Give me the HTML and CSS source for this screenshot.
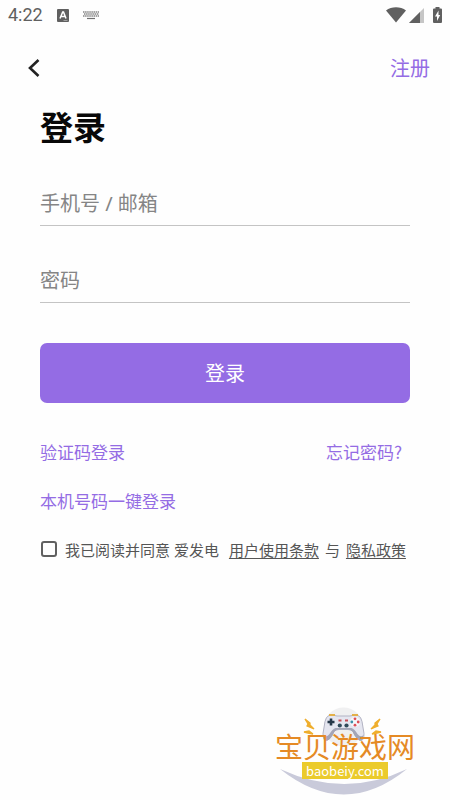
FILE: index.html
```html
<!DOCTYPE html>
<html lang="zh-CN">
<head>
<meta charset="utf-8">
<meta name="viewport" content="width=device-width, initial-scale=1">
<title>登录</title>
<link rel="stylesheet" href="styles.css">
</head>
<body>
<div class="screen">
  <div class="status">
    <div class="status-left">
      <span class="clock">4:22</span>
      <svg width="12" height="13" viewBox="0 0 12 13" aria-hidden="true">
        <rect width="12" height="13" rx="1" fill="#606060"/>
        <path d="M3 9.500 5.700 3h.8L9 9.500M4 7.500h4" fill="none" stroke="#fff" stroke-width="1.500"/>
        <path d="M6.500 11.500h4" stroke="#bbb" stroke-width=".7"/>
      </svg>
      <svg width="16" height="9" viewBox="0 0 16 9" aria-hidden="true">
        <path d="M0 1h16M1 3h15M0 5h16" stroke="#858585" stroke-width="1.300" stroke-dasharray="1.500 .6" fill="none"/>
        <path d="M4 7.500h8" stroke="#707070" stroke-width="1.200"/>
      </svg>
    </div>
    <div class="status-right">
      <svg width="20" height="16" viewBox="0 0 20 16" aria-hidden="true">
        <path d="M0 3.500C5.500-.8 14.500-.8 20 3.500L10 15.500Z" fill="#606060"/>
      </svg>
      <svg width="15" height="15" viewBox="0 0 15 15" aria-hidden="true">
        <path d="M15 0v15H0Z" fill="#c6c6c6"/>
        <path d="M11 4v11H0Z" fill="#606060"/>
      </svg>
      <svg class="battery" width="9" height="16" viewBox="0 0 9 16" aria-hidden="true">
        <path d="M2.500 0h4v1.500H8q1 0 1 1V15q0 1-1 1H1q-1 0-1-1V2.500q0-1 1-1h1.500Z" fill="#606060"/>
        <path d="M5.500 3.500 2 9.500h2V14l3.200-6H5.500Z" fill="#fff"/>
      </svg>
    </div>
  </div>

  <header class="bar">
    <button class="back" type="button" aria-label="返回">
      <svg width="12" height="18" viewBox="0 0 12 18" aria-hidden="true">
        <path d="M10.500 1 2 9l8.500 8" fill="none" stroke="#222" stroke-width="2.600"/>
      </svg>
    </button>
    <a class="register" href="#register">注册</a>
  </header>

  <main class="content">
    <h1 class="title">登录</h1>
    <form class="form">
      <input class="field" type="text" aria-label="手机号 / 邮箱" placeholder="手机号 / 邮箱">
      <input class="field" type="password" aria-label="密码" placeholder="密码">
      <button class="submit" type="button">登录</button>
      <div class="links">
        <a href="#code">验证码登录</a>
        <a href="#forgot">忘记密码?</a>
      </div>
      <div class="links">
        <a href="#phone">本机号码一键登录</a>
      </div>
      <div class="agree">
        <input class="check" type="checkbox" id="agree">
        <label for="agree">我已阅读并同意 爱发电</label>
        <a class="terms" href="#terms">用户使用条款</a>
        <span class="and">与</span>
        <a href="#privacy">隐私政策</a>
      </div>
    </form>
  </main>

  <footer class="brand">
    <svg class="art" width="138" height="89" viewBox="0 0 138 89" aria-hidden="true">
      <circle cx="68.500" cy="20" r="19.500" fill="#f0f0f1"/>
      <path d="M5 62Q69 113 132 62Q70 92 5 62Z" fill="#c9cada"/>
      <path d="M54 8.500q4-1 8 .5h13q4-1.500 8-.5 3 1 4 6l2 12q0 7-3 7-4 0-8-9-2-2-5-2h-9q-3 0-5 2-4 9-8 9-3 0-3-7l2-12q1-5 4-6Z" fill="#e5e6f0" stroke="#b3b4c4"/>
      <path d="M48.500 28q3 3 6-1 3-5 6-6h16q3 1 6 6 3 4 6 1-1 6-3 5.500-4 0-8-9-2-2-5-2h-8q-3 0-5 2-4 9-8 9-3 0-3-5.500Z" fill="#a4a5b7"/>
      <path d="M54 8h6M77 8h6" stroke="#e3b04a" stroke-width="1.800"/>
      <path d="M56 11.500v7M52.500 15h7" stroke="#263849" stroke-width="2.600"/>
      <circle cx="80" cy="15" r="5" fill="#f6f7fb"/>
      <circle cx="80" cy="11.800" r="1.400" fill="#dc4f59"/>
      <circle cx="80" cy="18.200" r="1.400" fill="#dc4f59"/>
      <circle cx="76.800" cy="15" r="1.400" fill="#3d8fa8"/>
      <circle cx="83.200" cy="15" r="1.400" fill="#dc4f59"/>
      <path d="M63.500 13.500h3M70 13.500h3" stroke="#c64b55" stroke-width="2"/>
      <circle cx="64.800" cy="18.500" r="2.100" fill="#304a5a"/>
      <circle cx="71.500" cy="18.500" r="2.100" fill="#304a5a"/>
      <path d="m30 12 5 4 0 2 4 4-7-3 1-2ZM29 25l5-1 4 3-5-1ZM105 12l-5 4 0 2-4 4 7-3-1-2ZM106 25l-5-1-4 3 5-1Z" fill="#efae2d" stroke="#efae2d" stroke-width="1.300"/>
    </svg>
    <div class="brand-name">宝贝游戏网</div>
    <div class="brand-url">baobeiy.com</div>
  </footer>
</div>
</body>
</html>
```
FILE: styles.css
```css
* {
  box-sizing: border-box;
}

body {
  margin: 0;
  background: #fefefe;
  color: #555;
  font-family: "Noto Sans", "Noto Sans CJK SC", sans-serif;
}

a {
  color: inherit;
  text-decoration: none;
}

button,
input {
  font-family: inherit;
}

svg {
  display: block;
}

.screen {
  display: flex;
  flex-direction: column;
  min-height: 100vh;
}

.status {
  display: flex;
  justify-content: space-between;
  align-items: center;
  height: 30px;
  padding: 0 8px;
}

.status-left {
  display: flex;
  align-items: center;
  gap: 14px;
}

.clock {
  font-family: Roboto, sans-serif;
  font-size: 18px;
  line-height: 32px;
  color: #606060;
}

.status-right {
  display: flex;
  align-items: center;
  gap: 3px;
}

.battery {
  margin-left: 6px;
}

.bar {
  display: flex;
  justify-content: space-between;
  align-items: center;
  height: 76px;
  padding: 0 20px 0 28px;
}

.back {
  padding: 0;
  border: 0;
  background: none;
}

.register {
  padding-bottom: 2px;
  font-size: 20px;
  color: #946ce4;
}

.content {
  padding: 0 40px;
}

.title {
  margin: 0;
  font-size: 33px;
  line-height: 44px;
  font-weight: 700;
  color: #080808;
}

.form {
  display: flex;
  flex-direction: column;
  padding-top: 28px;
}

.field {
  width: 100%;
  height: 48px;
  margin-bottom: 29px;
  padding: 4px 0 0;
  border: 0;
  border-bottom: 1px solid #c4c4c4;
  border-radius: 0;
  outline: 0;
  background: transparent;
  font-size: 20px;
}

.field::placeholder {
  color: #858585;
  opacity: 1;
}

.submit {
  height: 60px;
  margin: 11px 0 24px;
  padding: 0 0 2px;
  border: 0;
  border-radius: 7px;
  background: #946ce4;
  color: #fff;
  font-size: 20px;
}

.links {
  display: flex;
  justify-content: space-between;
  padding-right: 8px;
  font-family: "Noto Sans CJK SC", sans-serif;
  font-size: 17px;
  line-height: 49px;
  color: #946ce4;
}

.agree {
  display: flex;
  align-items: center;
  height: 48px;
  font-size: 15px;
  white-space: nowrap;
}

.agree a {
  text-decoration: underline;
  text-underline-offset: 2px;
}

.check {
  appearance: none;
  width: 16px;
  height: 16px;
  margin: 0 8px 0 1px;
  border: 2px solid #606060;
  border-radius: 3px;
}

.terms {
  margin-left: 10px;
}

.and {
  margin: 0 6px;
}

.brand {
  position: relative;
  align-self: flex-end;
  display: flex;
  flex-direction: column;
  align-items: center;
  margin: auto 35px 4px 0;
  padding-top: 25px;
}

.art {
  position: absolute;
  top: 0;
  left: 0;
}

.brand-name {
  position: relative;
  font-size: 28px;
  line-height: 30px;
  color: #e58a25;
}

.brand-url {
  position: relative;
  margin-bottom: 17px;
  padding: 0 4px;
  background: #ebcb2c;
  color: #fff;
  font-family: "Noto Sans CJK SC", sans-serif;
  font-size: 13px;
  line-height: 17px;
}
```
